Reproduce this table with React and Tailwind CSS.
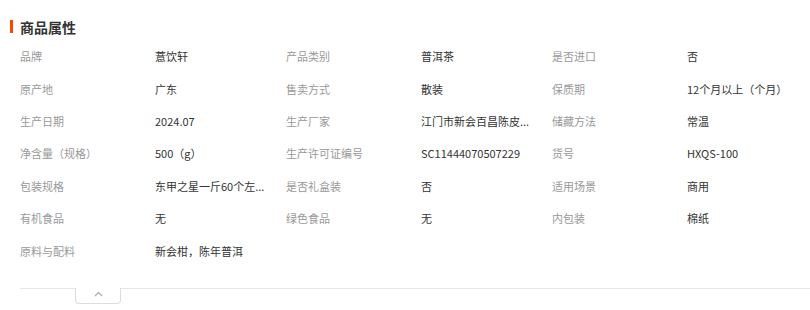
import React from "react";

const rows = [
  ["品牌", "薏饮轩", "产品类别", "普洱茶", "是否进口", "否"],
  ["原产地", "广东", "售卖方式", "散装", "保质期", "12个月以上（个月）"],
  ["生产日期", "2024.07", "生产厂家", "江门市新会百昌陈皮...", "储藏方法", "常温"],
  ["净含量（规格）", "500（g）", "生产许可证编号", "SC11444070507229", "货号", "HXQS-100"],
  ["包装规格", "东甲之星一斤60个左...", "是否礼盒装", "否", "适用场景", "商用"],
  ["有机食品", "无", "绿色食品", "无", "内包装", "棉纸"],
  ["原料与配料", "新会柑，陈年普洱"],
];

export default function App() {
  return (
    <div
      className="w-[810px] h-[310px] bg-white overflow-hidden relative"
      style={{ fontFamily: '"Noto Sans CJK SC", "Liberation Sans", sans-serif' }}
    >
      <div className="flex items-center h-[40px] pl-[10px] pt-[13px]">
        <div className="w-[3px] h-[13px] bg-[#ff4400] mr-[7px]" />
        <div className="text-[14px] font-bold text-[#333] leading-none">商品属性</div>
      </div>
      <div className="pl-[20px] grid grid-cols-[135px_131px_135px_131px_135px_131px]">
        {rows.map((r, i) =>
          r.map((t, j) => (
            <div
              key={i + "-" + j}
              className={
                "h-[32.4px] flex items-center text-[11px] leading-[16px] whitespace-nowrap " +
                (j % 2 === 0 ? "text-[#999]" : "text-[#333]")
              }
            >
              {t}
            </div>
          ))
        )}
      </div>
      <div className="ml-[20px] mt-[21px] border-t border-[#e6e6e6]">
        <div className="ml-[55px] -mt-px w-[46px] h-[16px] border border-t-0 border-[#dcdcdc] rounded-b-[4px] bg-white flex items-start justify-center pt-[3px]">
          <svg width="9" height="6" viewBox="0 0 9 6">
            <polyline points="1,5 4.5,1.5 8,5" fill="none" stroke="#aaa" strokeWidth="1.2" />
          </svg>
        </div>
      </div>
    </div>
  );
}
